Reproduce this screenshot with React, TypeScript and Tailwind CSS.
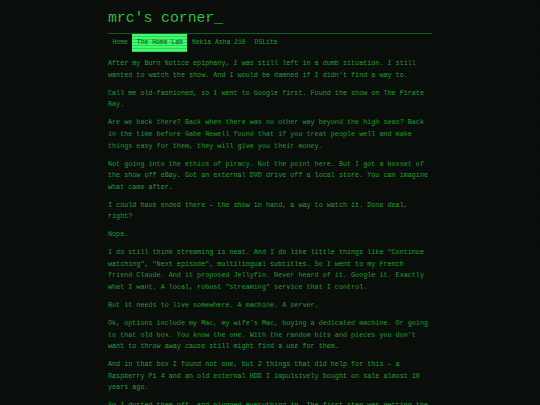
const navItems = [
  { label: 'Home', active: false },
  { label: 'The Home Lab', active: true },
  { label: 'Nokia Asha 210', active: false },
  { label: 'DSLite', active: false },
];

const paragraphs = [
  "After my Burn Notice epiphany, I was still left in a dumb situation. I still wanted to watch the show. And I would be damned if I didn't find a way to.",
  'Call me old-fashioned, so I went to Google first. Found the show on The Pirate Bay.',
  'Are we back there? Back when there was no other way beyond the high seas? Back in the time before Gabe Newell found that if you treat people well and make things easy for them, they will give you their money.',
  'Not going into the ethics of piracy. Not the point here. But I got a boxset of the show off eBay. Got an external DVD drive off a local store. You can imagine what came after.',
  'I could have ended there – the show in hand, a way to watch it. Done deal, right?',
  'Nope.',
  'I do still think streaming is neat. And I do like little things like "Continue watching", "Next episode", multilingual subtitles. So I went to my French friend Claude. And it proposed Jellyfin. Never heard of it. Google it. Exactly what I want. A local, robust "streaming" service that I control.',
  'But it needs to live somewhere. A machine. A server.',
  "Ok, options include my Mac, my wife's Mac, buying a dedicated machine. Or going to that old box. You know the one. With the random bits and pieces you don't want to throw away cause still might find a use for them.",
  'And in that box I found not one, but 2 things that did help for this – a Raspberry Pi 4 and an old external HDD I impulsively bought on sale almost 10 years ago.',
  "So I dusted them off, and plugged everything in. The first step was getting the Pi to boot, which it did after a bit of fiddling with the SD card.",
];

export default function App() {
  return (
    <div className="relative h-[405px] overflow-hidden bg-[#0b0f0b] font-['Liberation_Mono','DejaVu_Sans_Mono',monospace]">
      <div className="mx-auto w-[324px]">
        <header className="pt-[7.5px] mb-[5.5px]">
          <h1 className="text-[14.75px] leading-[20px] text-[#35c640]">mrc's corner_</h1>
        </header>

        <nav className="flex border-t-[1.5px] border-[#1d6a29] text-[6.4px]">
          {navItems.map((item) => (
            <span
              key={item.label}
              className={
                item.active
                  ? 'flex h-[17.7px] items-center px-[4.5px] bg-[#3dfb6c] text-[#0d4a1a]'
                  : 'flex h-[17.7px] items-center px-[4.5px] text-[#27a336]'
              }
            >
              {item.label}
            </span>
          ))}
        </nav>

        <main className="pt-[6.5px] pr-[2px] text-[6.75px] leading-[11.6px] text-[#23a232]">
          {paragraphs.map((p, i) => (
            <p key={i} className="mb-[6.4px]">
              {p}
            </p>
          ))}
        </main>
      </div>

      {/* scanlines */}
      <div className="pointer-events-none absolute inset-0 bg-[repeating-linear-gradient(to_bottom,rgba(0,0,0,0.18)_0px,rgba(0,0,0,0.18)_1px,transparent_1px,transparent_3px)]" />
    </div>
  );
}
